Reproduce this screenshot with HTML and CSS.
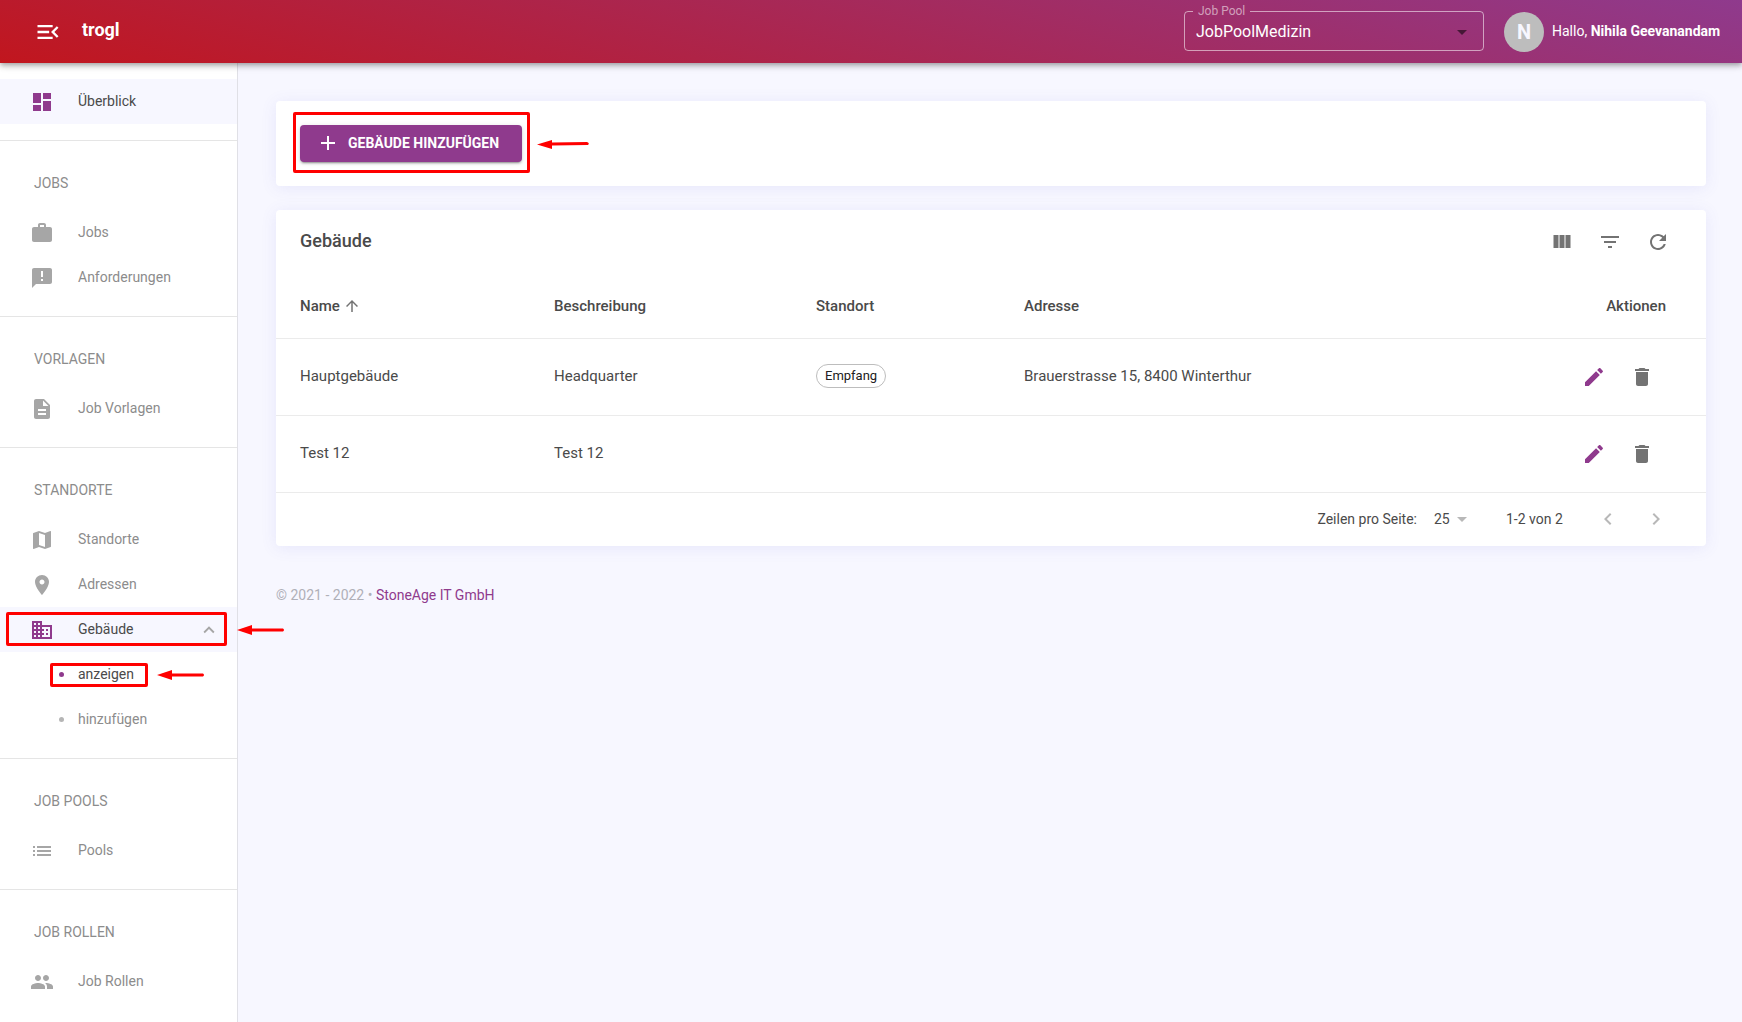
FILE: index.html
```html
<!DOCTYPE html>
<html lang="de">
<head>
<meta charset="utf-8">
<meta name="viewport" content="width=device-width, initial-scale=1">
<title>trogl – Gebäude</title>
<link rel="stylesheet" href="styles.css">
</head>
<body>
<header class="topbar">
  <button class="icon-button menu-toggle" type="button" aria-label="Menü einklappen">
    <svg class="icon icon-large" viewBox="0 0 24 24"><path d="M3 18h13v-2H3v2zm0-5h10v-2H3v2zm0-7v2h13V6H3zm18 9.590L17.420 12 21 8.410 19.590 7l-5 5 5 5L21 15.590z"/></svg>
  </button>
  <span class="brand">trogl</span>
  <fieldset class="pool">
    <legend><label for="pool">Job Pool</label></legend>
    <div class="select-wrap">
      <select id="pool"><option>JobPoolMedizin</option></select>
      <svg class="icon select-arrow" viewBox="0 0 24 24"><path d="M7 10l5 5 5-5z"/></svg>
    </div>
  </fieldset>
  <div class="user">
    <span class="avatar">N</span>
    <span class="greeting">Hallo, <strong>Nihila Geevanandam</strong></span>
  </div>
</header>
<div class="layout">
  <nav class="sidebar">
    <ul class="nav-group">
      <li><a class="nav-item current" href="#"><svg class="icon" viewBox="0 0 24 24"><path d="M3 13h8V3H3v10zm0 8h8v-6H3v6zm10 0h8V11h-8v10zm0-18v6h8V3h-8z"/></svg>Überblick</a></li>
    </ul>
    <h2 class="nav-title">Jobs</h2>
    <ul class="nav-group">
      <li><a class="nav-item" href="#"><svg class="icon" viewBox="0 0 24 24"><path d="M20 6h-4V4c0-1.110-.89-2-2-2h-4c-1.110 0-2 .89-2 2v2H4c-1.110 0-1.990.89-1.990 2L2 19c0 1.110.89 2 2 2h16c1.110 0 2-.89 2-2V8c0-1.110-.89-2-2-2zm-6 0h-4V4h4v2z"/></svg>Jobs</a></li>
      <li><a class="nav-item" href="#"><svg class="icon" viewBox="0 0 24 24"><path d="M20 2H4c-1.100 0-1.990.9-1.990 2L2 22l4-4h14c1.100 0 2-.9 2-2V4c0-1.100-.9-2-2-2zm-7 9h-2V5h2v6zm0 4h-2v-2h2v2z"/></svg>Anforderungen</a></li>
    </ul>
    <h2 class="nav-title">Vorlagen</h2>
    <ul class="nav-group">
      <li><a class="nav-item" href="#"><svg class="icon" viewBox="0 0 24 24"><path d="M14 2H6c-1.100 0-1.990.9-1.990 2L4 20c0 1.100.89 2 1.990 2H18c1.100 0 2-.9 2-2V8l-6-6zm2 16H8v-2h8v2zm0-4H8v-2h8v2zm-3-5V3.500L18.500 9H13z"/></svg>Job Vorlagen</a></li>
    </ul>
    <h2 class="nav-title">Standorte</h2>
    <ul class="nav-group">
      <li><a class="nav-item" href="#"><svg class="icon" viewBox="0 0 24 24"><path d="M20.500 3l-.16.030L15 5.100 9 3 3.360 4.900c-.21.070-.36.250-.36.480V20.500c0 .28.220.5.500.5l.16-.030L9 18.900l6 2.100 5.640-1.900c.21-.070.360-.250.360-.480V3.500c0-.28-.220-.5-.500-.5zM15 19l-6-2.110V5l6 2.110V19z"/></svg>Standorte</a></li>
      <li><a class="nav-item" href="#"><svg class="icon" viewBox="0 0 24 24"><path d="M12 2C8.130 2 5 5.130 5 9c0 5.250 7 13 7 13s7-7.750 7-13c0-3.870-3.130-7-7-7zm0 9.500c-1.380 0-2.500-1.120-2.500-2.500s1.120-2.500 2.500-2.500 2.500 1.120 2.500 2.500-1.120 2.500-2.500 2.500z"/></svg>Adressen</a></li>
      <li class="marked">
        <a class="nav-item current" href="#"><svg class="icon" viewBox="0 0 24 24"><path d="M12 7V3H2v18h20V7H12zM6 19H4v-2h2v2zm0-4H4v-2h2v2zm0-4H4V9h2v2zm0-4H4V5h2v2zm4 12H8v-2h2v2zm0-4H8v-2h2v2zm0-4H8V9h2v2zm0-4H8V5h2v2zm10 12h-8v-2h2v-2h-2v-2h2v-2h-2V9h8v10zm-2-8h-2v2h2v-2zm0 4h-2v2h2v-2z"/></svg>Gebäude<svg class="icon icon-small expand" viewBox="0 0 24 24"><path d="M12 8l-6 6 1.410 1.410L12 10.830l4.590 4.580L18 14z"/></svg></a>
        <span class="mark mark-nav"></span>
        <svg class="arrow arrow-nav" viewBox="0 0 48 10"><path d="M0 5L15 0V3.500H46Q48 5 46 6.500H15V10z"/></svg>
      </li>
      <li class="marked">
        <a class="nav-item sub-item active" href="#"><span class="dot"></span>anzeigen</a>
        <span class="mark mark-sub"></span>
        <svg class="arrow arrow-sub" viewBox="0 0 48 10"><path d="M0 5L15 0V3.500H46Q48 5 46 6.500H15V10z"/></svg>
      </li>
      <li><a class="nav-item sub-item" href="#"><span class="dot"></span>hinzufügen</a></li>
    </ul>
    <h2 class="nav-title">Job Pools</h2>
    <ul class="nav-group">
      <li><a class="nav-item" href="#"><svg class="icon" viewBox="0 0 24 24"><path d="M3 13h2v-2H3v2zm0 4h2v-2H3v2zm0-8h2V7H3v2zm4 4h14v-2H7v2zm0 4h14v-2H7v2zM7 7v2h14V7H7z"/></svg>Pools</a></li>
    </ul>
    <h2 class="nav-title">Job Rollen</h2>
    <ul class="nav-group last">
      <li><a class="nav-item" href="#"><svg class="icon" viewBox="0 0 24 24"><path d="M16 11c1.660 0 2.990-1.340 2.990-3S17.660 5 16 5s-3 1.340-3 3 1.340 3 3 3zm-8 0c1.660 0 2.990-1.340 2.990-3S9.660 5 8 5 5 6.340 5 8s1.340 3 3 3zm0 2c-2.330 0-7 1.170-7 3.500V19h14v-2.500c0-2.330-4.670-3.500-7-3.500zm8 0c-.29 0-.62.020-.97.050 1.160.84 1.970 1.970 1.970 3.450V19h6v-2.500c0-2.330-4.670-3.500-7-3.500z"/></svg>Job Rollen</a></li>
    </ul>
  </nav>
  <main class="content">
    <section class="card actions-card">
      <div class="marked">
        <button class="add-button" type="button"><svg class="icon" viewBox="0 0 24 24"><path d="M19 13h-6v6h-2v-6H5v-2h6V5h2v6h6v2z"/></svg>Gebäude hinzufügen</button>
        <span class="mark mark-button"></span>
        <svg class="arrow arrow-button" viewBox="0 0 52 10"><path d="M0 5.500L15 1V3.500L50 3Q53 4 51 6L15 6.500V10z"/></svg>
      </div>
    </section>
    <section class="card">
      <div class="toolbar">
        <h1>Gebäude</h1>
        <button class="icon-button" type="button" aria-label="Spalten anzeigen"><svg class="icon" viewBox="0 0 24 24"><path d="M8.500 5v13H3.500V5zM14.500 5v13H9.500V5zM20.500 5v13H15.500V5z"/></svg></button>
        <button class="icon-button" type="button" aria-label="Filter"><svg class="icon" viewBox="0 0 24 24"><path d="M10 18h4v-2h-4v2zM3 6v2h18V6H3zm3 7h12v-2H6v2z"/></svg></button>
        <button class="icon-button" type="button" aria-label="Aktualisieren"><svg class="icon" viewBox="0 0 24 24"><path d="M17.650 6.350C16.200 4.900 14.210 4 12 4c-4.420 0-7.990 3.580-7.990 8s3.570 8 7.990 8c3.730 0 6.840-2.550 7.730-6h-2.080c-.82 2.330-3.040 4-5.650 4-3.310 0-6-2.690-6-6s2.690-6 6-6c1.660 0 3.140.69 4.220 1.780L13 11h7V4l-2.350 2.350z"/></svg></button>
      </div>
      <table>
        <colgroup><col class="col-name"><col class="col-text"><col class="col-place"><col><col class="col-actions"></colgroup>
        <thead>
          <tr>
            <th scope="col" aria-sort="ascending"><span class="sort">Name<svg class="icon icon-sort" viewBox="0 0 24 24"><path d="M4 12l1.410 1.410L11 7.830V20h2V7.830l5.580 5.590L20 12l-8-8-8 8z"/></svg></span></th>
            <th scope="col">Beschreibung</th>
            <th scope="col">Standort</th>
            <th scope="col">Adresse</th>
            <th scope="col" class="end">Aktionen</th>
          </tr>
        </thead>
        <tbody>
          <tr>
            <td>Hauptgebäude</td>
            <td>Headquarter</td>
            <td><span class="chip">Empfang</span></td>
            <td>Brauerstrasse 15, 8400 Winterthur</td>
            <td class="end"><div class="row-actions">
              <button class="icon-button edit" type="button" aria-label="Bearbeiten"><svg class="icon" viewBox="0 0 24 24"><path d="M3 17.250V21h3.750L17.810 9.940l-3.750-3.750L3 17.250zM20.710 7.040c.39-.39.390-1.020 0-1.410l-2.340-2.340c-.39-.39-1.020-.39-1.410 0l-1.830 1.830 3.750 3.750 1.830-1.830z"/></svg></button>
              <button class="icon-button" type="button" aria-label="Löschen"><svg class="icon" viewBox="0 0 24 24"><path d="M6 19c0 1.100.9 2 2 2h8c1.100 0 2-.9 2-2V7H6v12zM19 4h-3.500l-1-1h-5l-1 1H5v2h14V4z"/></svg></button>
            </div></td>
          </tr>
          <tr>
            <td>Test 12</td>
            <td>Test 12</td>
            <td></td>
            <td></td>
            <td class="end"><div class="row-actions">
              <button class="icon-button edit" type="button" aria-label="Bearbeiten"><svg class="icon" viewBox="0 0 24 24"><path d="M3 17.250V21h3.750L17.810 9.940l-3.750-3.750L3 17.250zM20.710 7.040c.39-.39.390-1.020 0-1.410l-2.340-2.340c-.39-.39-1.020-.39-1.410 0l-1.830 1.830 3.750 3.750 1.830-1.830z"/></svg></button>
              <button class="icon-button" type="button" aria-label="Löschen"><svg class="icon" viewBox="0 0 24 24"><path d="M6 19c0 1.100.9 2 2 2h8c1.100 0 2-.9 2-2V7H6v12zM19 4h-3.500l-1-1h-5l-1 1H5v2h14V4z"/></svg></button>
            </div></td>
          </tr>
        </tbody>
      </table>
      <div class="pagination">
        <label for="rows">Zeilen pro Seite:</label>
        <div class="select-wrap rows">
          <select id="rows"><option>25</option></select>
          <svg class="icon select-arrow" viewBox="0 0 24 24"><path d="M7 10l5 5 5-5z"/></svg>
        </div>
        <span class="range">1-2 von 2</span>
        <button class="icon-button" type="button" disabled aria-label="Vorherige Seite"><svg class="icon" viewBox="0 0 24 24"><path d="M15.410 7.410L14 6l-6 6 6 6 1.410-1.410L10.830 12z"/></svg></button>
        <button class="icon-button" type="button" disabled aria-label="Nächste Seite"><svg class="icon" viewBox="0 0 24 24"><path d="M10 6L8.590 7.410 13.170 12l-4.580 4.590L10 18l6-6z"/></svg></button>
      </div>
    </section>
    <footer class="footer">© 2021 - 2022 • <a href="#">StoneAge IT GmbH</a></footer>
  </main>
</div>
</body>
</html>
```
FILE: styles.css
```css
:root {
  --accent: #8f3a8d;
  --page: #f7f7ff;
  --line: #ebebeb;
  --text: #4a4a4a;
  --muted: #8c8c8c;
  --icon: #737373;
  --mark: #ff0000;
}

* {
  box-sizing: border-box;
}

body {
  margin: 0;
  min-height: 100vh;
  display: flex;
  flex-direction: column;
  background: var(--page);
  color: var(--text);
  font: 14px/20px Roboto, "Liberation Sans", sans-serif;
}

a {
  color: inherit;
  text-decoration: none;
}

button,
select {
  font: inherit;
  color: inherit;
  border: 0;
  background: none;
}

.icon {
  display: block;
  flex: none;
  width: 24px;
  height: 24px;
  fill: currentColor;
}

.icon-large {
  width: 28px;
  height: 28px;
}

.icon-small {
  width: 22px;
  height: 22px;
}

.icon-button {
  display: flex;
  padding: 12px;
  color: var(--icon);
}

.icon-button:disabled {
  color: #b8b8b8;
}

/* Top bar */
.topbar {
  position: relative;
  z-index: 2;
  display: flex;
  align-items: center;
  height: 63px;
  padding: 0 18px 0 22px;
  color: #fff;
  background: linear-gradient(15deg, #c1161e, #8f3a8d);
  box-shadow: 0 2px 4px -1px rgba(0, 0, 0, .2), 0 4px 5px rgba(0, 0, 0, .14), 0 1px 10px rgba(0, 0, 0, .12);
}

.menu-toggle {
  color: #fff;
}

.brand {
  margin: 0 auto 4px 8px;
  font-size: 18px;
  font-weight: 700;
}

.pool {
  align-self: flex-end;
  width: 300px;
  height: 46px;
  margin: 0 20px 12px 0;
  padding: 0;
  border: 1px solid rgba(255, 255, 255, .55);
  border-radius: 4px;
}

.pool legend {
  margin-left: 8px;
  padding: 0 5px;
  color: rgba(255, 255, 255, .55);
  font-size: 12px;
  line-height: 12px;
}

.select-wrap {
  display: grid;
  align-items: center;
}

.select-wrap > * {
  grid-area: 1 / 1;
}

.select-wrap select {
  appearance: none;
  width: 100%;
  padding: 0;
}

.select-arrow {
  justify-self: end;
  pointer-events: none;
}

.pool .select-wrap select {
  height: 30px;
  padding: 0 11px;
  font-size: 16px;
}

.pool .select-arrow {
  margin-right: 9px;
  color: rgba(0, 0, 0, .54);
}

.user {
  display: flex;
  align-items: center;
  gap: 8px;
  min-width: 220px;
}

.greeting {
  padding-bottom: 2px;
}

.avatar {
  display: grid;
  place-items: center;
  width: 40px;
  height: 40px;
  border-radius: 50%;
  background: #bdbdbd;
  color: var(--page);
  font-size: 20px;
  font-weight: 700;
}

/* Sidebar */
.layout {
  display: flex;
  flex: 1;
}

.sidebar {
  flex: none;
  width: 238px;
  padding-top: 16px;
  background: #fff;
  border-right: 1px solid #e0e0e6;
}

.nav-group {
  margin: 0;
  padding: 0 0 16px;
  list-style: none;
  border-bottom: 1px solid #e5e5e5;
}

.nav-group.last {
  border-bottom: 0;
}

.nav-title {
  margin: 0;
  padding: 32px 34px 17px;
  color: var(--muted);
  font-size: 14px;
  font-weight: 400;
  text-transform: uppercase;
}

.nav-item {
  display: flex;
  align-items: center;
  gap: 24px;
  height: 45px;
  padding: 0 17px 1px 30px;
  color: var(--muted);
}

.nav-item .icon {
  margin-top: 2px;
  color: #a6a6a6;
}

.nav-item.current {
  color: var(--text);
  background: var(--page);
}

.nav-item.current .icon:first-child {
  color: var(--accent);
}

.nav-item .expand {
  margin-left: auto;
}

.nav-item.sub-item {
  gap: 14px;
  padding-left: 59px;
}

.sub-item.active {
  color: var(--text);
}

.dot {
  width: 5px;
  height: 5px;
  border-radius: 50%;
  background: #b5b5b5;
}

.active .dot {
  background: var(--accent);
}

/* Red highlight frames and arrows laid over the controls */
.marked {
  position: relative;
}

.mark {
  position: absolute;
  border: 3px solid var(--mark);
  border-radius: 2px;
  pointer-events: none;
}

.mark-nav {
  inset: 5px 10px 6px 6px;
}

.mark-sub {
  inset: 11px auto 10px 50px;
  width: 98px;
}

.mark-button {
  inset: -13px -8px -11px -7px;
}

.arrow {
  position: absolute;
  width: 48px;
  height: 10px;
  fill: var(--mark);
}

.arrow-nav {
  top: 18px;
  left: 237px;
}

.arrow-sub {
  top: 18px;
  left: 157px;
}

.arrow-button {
  top: 14px;
  left: calc(100% + 15px);
  width: 52px;
}

/* Content */
.content {
  flex: 1;
  min-width: 0;
  padding: 38px 36px 38px 38px;
}

.card {
  margin-bottom: 24px;
  background: #fff;
  border-radius: 4px;
  box-shadow: 0 2px 16px rgba(90, 90, 220, .1);
}

.actions-card {
  display: flex;
  padding: 24px;
}

.add-button {
  display: flex;
  align-items: center;
  gap: 8px;
  min-width: 222px;
  height: 37px;
  padding: 0 16px 1px;
  border-radius: 4px;
  color: #fff;
  background: var(--accent);
  font-weight: 700;
  text-transform: uppercase;
  box-shadow: 0 3px 1px -2px rgba(0, 0, 0, .2), 0 2px 2px rgba(0, 0, 0, .14), 0 1px 5px rgba(0, 0, 0, .12);
}

.toolbar {
  display: flex;
  align-items: center;
  height: 64px;
  padding: 0 24px;
}

.toolbar h1 {
  margin: 0 auto 0 0;
  padding-bottom: 2px;
  font-size: 18px;
  line-height: 24px;
  font-weight: 500;
}

table {
  width: 100%;
  border-collapse: collapse;
  table-layout: fixed;
  font-size: 15px;
}

.col-name {
  width: 254px;
}

.col-text {
  width: 262px;
}

.col-place {
  width: 208px;
}

.col-actions {
  width: 180px;
}

th,
td {
  height: 77px;
  padding: 0 24px 2px;
  border-bottom: 1px solid var(--line);
  text-align: left;
}

th {
  height: 64px;
  padding-bottom: 0;
  font-weight: 500;
}

.end {
  padding-right: 40px;
  text-align: right;
}

.sort {
  display: flex;
  align-items: center;
  gap: 3px;
}

.icon-sort {
  width: 18px;
  height: 18px;
  color: var(--icon);
}

.chip {
  display: inline-block;
  height: 24px;
  padding: 0 8px;
  border: 1px solid #bdbdbd;
  border-radius: 12px;
  color: #212121;
  font-size: 13px;
  line-height: 22px;
  vertical-align: middle;
}

.row-actions {
  display: flex;
  justify-content: flex-end;
  padding-top: 2px;
}

.edit {
  color: var(--accent);
}

.pagination {
  display: flex;
  align-items: center;
  justify-content: flex-end;
  height: 53px;
  padding: 0 26px 1px;
}

.rows {
  width: 40px;
  margin: 0 32px 0 17px;
}

.rows .select-arrow {
  color: #b8b8b8;
}

.range {
  min-width: 58px;
  margin-right: 20px;
}

.footer {
  padding-top: 15px;
  color: #b0b0b8;
}

.footer a {
  color: var(--accent);
}
```
